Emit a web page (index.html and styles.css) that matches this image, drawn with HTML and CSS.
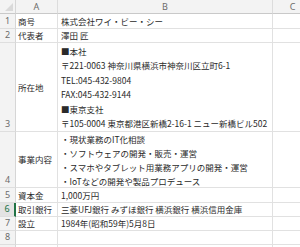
FILE: index.html
```html
<!DOCTYPE html>
<html lang="ja">
<head>
<meta charset="utf-8">
<title>会社概要</title>
<link rel="stylesheet" href="styles.css">
</head>
<body>
<div class="sheet">
  <div class="corner"><span class="tri"></span></div>
  <div class="colhead">A</div>
  <div class="colhead">B</div>
  <div class="colhead">C</div>

  <div class="rowhead">1</div>
  <div class="cell label">商号</div>
  <div class="cell">株式会社ワイ・ビー・シー</div>
  <div class="cell"></div>

  <div class="rowhead">2</div>
  <div class="cell label">代表者</div>
  <div class="cell">澤田 匠</div>
  <div class="cell"></div>

  <div class="rowhead">3</div>
  <div class="cell label">所在地</div>
  <div class="cell multi addr">
    <span>■本社</span>
    <span>〒221-0063 神奈川県横浜市神奈川区立町6-1</span>
    <span>TEL:045-432-9804</span>
    <span>FAX:045-432-9144</span>
    <span>■東京支社</span>
    <span>〒105-0004 東京都港区新橋2-16-1 ニュー新橋ビル502</span>
  </div>
  <div class="cell"></div>

  <div class="rowhead">4</div>
  <div class="cell label">事業内容</div>
  <div class="cell multi biz">
    <span>・現状業務のIT化相談</span>
    <span>・ソフトウェアの開発・販売・運営</span>
    <span>・スマホやタブレット用業務アプリの開発・運営</span>
    <span>・IoTなどの開発や製品プロデュース</span>
  </div>
  <div class="cell"></div>

  <div class="rowhead">5</div>
  <div class="cell label">資本金</div>
  <div class="cell">1,000万円</div>
  <div class="cell"></div>

  <div class="rowhead sel">6</div>
  <div class="cell label">取引銀行</div>
  <div class="cell">三菱UFJ銀行 みずほ銀行 横浜銀行 横浜信用金庫</div>
  <div class="cell"></div>

  <div class="rowhead">7</div>
  <div class="cell label">設立</div>
  <div class="cell">1984年(昭和59年)5月8日</div>
  <div class="cell"></div>

  <div class="rowhead">8</div>
  <div class="cell label"></div>
  <div class="cell"></div>
  <div class="cell"></div>

  <div class="rowhead"></div>
  <div class="cell label"></div>
  <div class="cell"></div>
  <div class="cell"></div>
</div>
</body>
</html>
```

FILE: styles.css
```css
html, body {
  margin: 0;
  padding: 0;
  background: #ffffff;
  overflow: hidden;
}

.sheet {
  display: grid;
  grid-template-columns: 16px 42px 215px 40px;
  grid-template-rows: 14px 15px 14px 89px 56px 15px 14px 14px 14px 14px;
  font-family: "Noto Sans CJK JP", "Noto Sans", sans-serif;
  font-size: 8.5px;
  color: #2a2a2a;
  width: 313px;
}

.corner,
.colhead,
.rowhead,
.cell {
  box-sizing: border-box;
  border-right: 1px solid #e1e1e1;
  border-bottom: 1px solid #e1e1e1;
}

.corner {
  background: #f3f3f3;
  border-bottom: 1px solid #c9c9c9;
  border-right: 1px solid #d6d6d6;
  display: flex;
  align-items: flex-end;
  justify-content: flex-end;
  padding: 0 2px 2px 0;
}

.tri {
  width: 0;
  height: 0;
  border-left: 8px solid transparent;
  border-bottom: 8px solid #d9d9d9;
}

.colhead {
  background: #f3f3f3;
  border-bottom: 1px solid #c9c9c9;
  border-right: 1px solid #dcdcdc;
  color: #6b6b6b;
  font-family: "Noto Sans", "Liberation Sans", sans-serif;
  font-size: 9px;
  display: flex;
  align-items: center;
  justify-content: center;
}

.rowhead {
  background: #f3f3f3;
  border-right: 1px solid #d6d6d6;
  border-bottom: 1px solid #dedede;
  color: #6b6b6b;
  font-family: "Noto Sans", "Liberation Sans", sans-serif;
  font-size: 9px;
  display: flex;
  align-items: flex-end;
  justify-content: center;
  padding-bottom: 1px;
  line-height: 12px;
}

.rowhead.sel {
  background: #e3e3e3;
  color: #217346;
  border-right: 2px solid #217346;
}

.cell {
  background: #ffffff;
  display: flex;
  align-items: center;
  padding-left: 3px;
  white-space: nowrap;
  overflow: visible;
  line-height: 13px;
}

.cell.label {
  padding-left: 2px;
}

.multi {
  flex-direction: column;
  align-items: flex-start;
  justify-content: flex-start;
}

.multi span {
  display: block;
}

.addr {
  padding-top: 1px;
  line-height: 14.4px;
}

.biz {
  padding-top: 0;
  line-height: 14px;
}
```
